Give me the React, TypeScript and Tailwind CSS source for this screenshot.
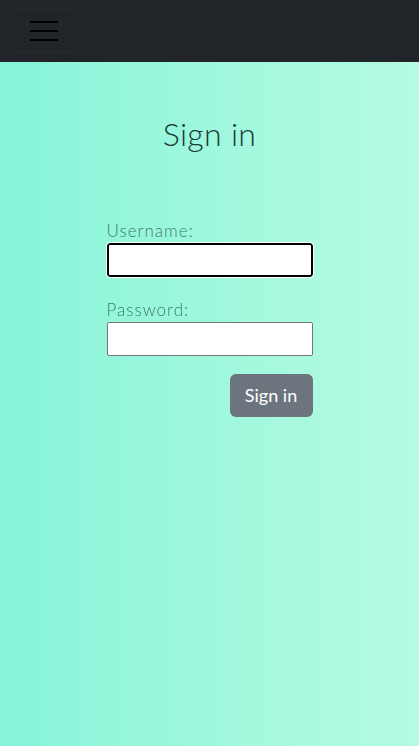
export default function App() {
  return (
    <div className="min-h-[746px] w-full bg-gradient-to-r from-[#86f4d9] to-[#b5fbe1] font-['Lato',sans-serif]">
      <nav className="flex h-[62px] items-center bg-[#212529] px-[13px]">
        <button className="flex h-[44px] w-[62px] flex-col items-center justify-center gap-[7px] rounded-[6px] border border-white/[0.03]">
          <span className="block h-[2px] w-[28px] bg-black" />
          <span className="block h-[2px] w-[28px] bg-black" />
          <span className="block h-[2px] w-[28px] bg-black" />
        </button>
      </nav>
      <main className="flex flex-col items-center">
        <h1 className="mt-[56px] text-[32px] font-light leading-none tracking-[0.3px] text-[#173a3a]">Sign in</h1>
        <form className="mt-[70px] flex w-[206px] flex-col">
          <label className="text-[17px] font-light leading-[22px] tracking-[1px] text-[#3f7c66]">Username:</label>
          <input
            autoFocus
            className="mt-[1px] h-[34px] w-full rounded-[3px] border-2 border-black bg-white px-1 outline outline-1 outline-white"
          />
          <label className="mt-[22px] text-[17px] font-light leading-[22px] tracking-[1px] text-[#3f7c66]">Password:</label>
          <input
            type="password"
            className="mt-[1px] h-[34px] w-full rounded-[2px] border border-[#767676] bg-white px-1"
          />
          <div className="mt-[18px] flex justify-end">
            <button
              type="button"
              className="h-[43px] w-[83px] rounded-[6px] bg-[#6c757d] text-[18px] text-white"
            >
              Sign in
            </button>
          </div>
        </form>
      </main>
    </div>
  );
}
